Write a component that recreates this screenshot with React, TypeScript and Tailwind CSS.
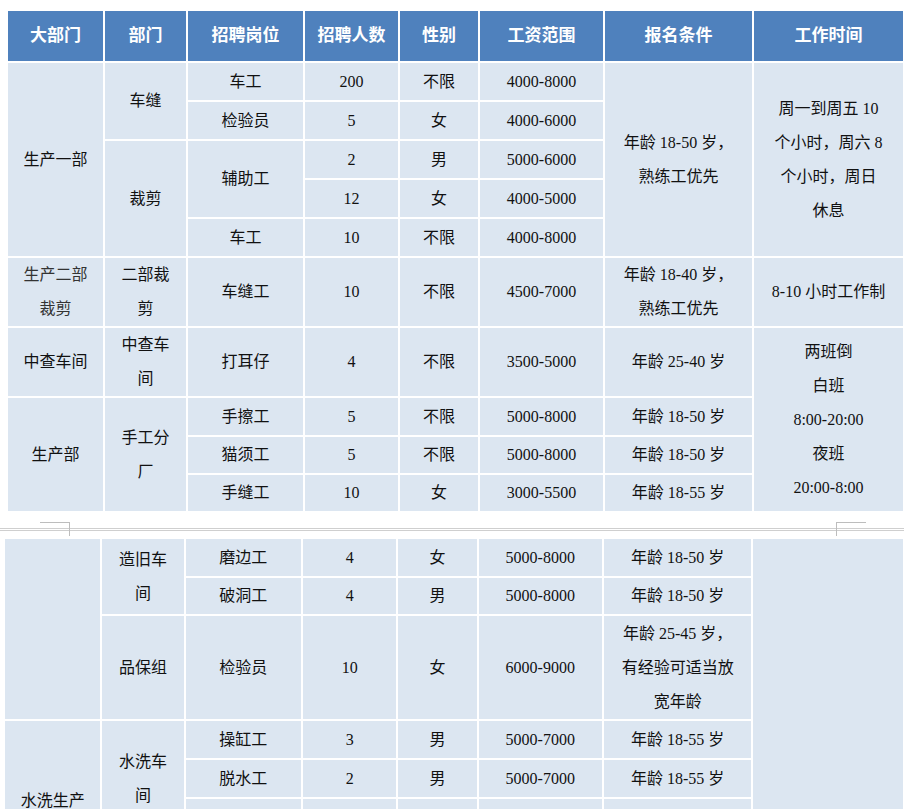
import React from "react";

const F = { fontFamily: '"Liberation Serif","Noto Sans CJK SC",serif' };
const W = [97, 83, 117, 95, 80, 125, 149, 151];

type C = { t?: React.ReactNode; rs?: number; cls?: string };
const Cell = ({ t, rs, cls }: C) => (
  <td rowSpan={rs} className={`border-2 border-white bg-[#dce6f1] text-center align-middle leading-[34px] text-[16px] text-[#111] ${cls ?? "px-[14px]"}`}>{t}</td>
);

function Row({ h, cells }: { h: number; cells: C[] }) {
  return <tr style={{ height: h }}>{cells.map((c, i) => <Cell key={i} {...c} />)}</tr>;
}

function Cols() {
  return <colgroup>{W.map((w, i) => <col key={i} style={{ width: w }} />)}</colgroup>;
}

const s = (...a: (string | C)[]): C[] => a.map((x) => (typeof x === "string" ? { t: x } : x));

export default function App() {
  const heads = ["大部门", "部门", "招聘岗位", "招聘人数", "性别", "工资范围", "报名条件", "工作时间"];
  return (
    <div className="w-[904px] h-[809px] overflow-hidden bg-white relative" style={F}>
      <div className="pt-[9px] pl-[6px]">
        <table className="table-fixed border-collapse w-[899px]">
          <Cols />
          <tbody>
            <tr style={{ height: 52 }}>
              {heads.map((h) => (
                <th key={h} className="border-2 border-white bg-[#4f81bd] text-white font-bold text-[17px] text-center">{h}</th>
              ))}
            </tr>
            <Row h={39} cells={s({ t: "生产一部", rs: 5, cls: "px-[14px] text-[#1f3864]" }, { t: "车缝", rs: 2 }, "车工", "200", "不限", "4000-8000", { t: "年龄 18-50 岁，熟练工优先", rs: 5 }, { t: "周一到周五 10 个小时，周六 8 个小时，周日休息", rs: 5, cls: "px-[20px]" })} />
            <Row h={39} cells={s("检验员", "5", "女", "4000-6000")} />
            <Row h={39} cells={s({ t: "裁剪", rs: 3 }, { t: "辅助工", rs: 2 }, "2", "男", "5000-6000")} />
            <Row h={39} cells={s("12", "女", "4000-5000")} />
            <Row h={39} cells={s("车工", "10", "不限", "4000-8000")} />
            <Row h={69} cells={s({ t: "生产二部裁剪", cls: "px-[14px] text-[#333]" }, "二部裁剪", "车缝工", "10", "不限", "4500-7000", "年龄 18-40 岁，熟练工优先", "8-10 小时工作制")} />
            <Row h={69} cells={s({ t: "中查车间", cls: "px-[14px] text-[#1f4e99]" }, "中查车间", "打耳仔", "4", "不限", "3500-5000", "年龄 25-40 岁", { t: <>两班倒<br />白班<br />8:00-20:00<br />夜班<br />20:00-8:00</>, rs: 4 })} />
            <Row h={39} cells={s({ t: "生产部", rs: 3 }, { t: "手工分厂", rs: 3 }, "手擦工", "5", "不限", "5000-8000", "年龄 18-50 岁")} />
            <Row h={38} cells={s("猫须工", "5", "不限", "5000-8000", "年龄 18-50 岁")} />
            <Row h={38} cells={s("手缝工", "10", "女", "3000-5500", "年龄 18-55 岁")} />
          </tbody>
        </table>
      </div>
      <div className="relative h-[24px]">
        <div className="absolute left-0 right-0 top-[15px] h-[3px] border-t border-b border-[#cfcfcf]" />
        <div className="absolute left-[40px] top-[9px] w-[30px] h-[14px] border-t border-r border-[#bdbdbd]" />
        <div className="absolute left-[836px] top-[9px] w-[30px] h-[14px] border-t border-l border-[#bdbdbd]" />
      </div>
      <div className="pl-[3px]">
        <table className="table-fixed border-collapse w-[902px]">
          <Cols />
          <tbody>
            <Row h={39} cells={s({ t: "", rs: 3 }, { t: "造旧车间", rs: 2 }, "磨边工", "4", "女", "5000-8000", "年龄 18-50 岁", { t: "", rs: 8 })} />
            <Row h={38} cells={s("破洞工", "4", "男", "5000-8000", "年龄 18-50 岁")} />
            <Row h={105} cells={s("品保组", "检验员", "10", "女", "6000-9000", "年龄 25-45 岁，有经验可适当放宽年龄")} />
            <Row h={39} cells={s({ t: "水洗生产部", rs: 4 }, { t: "水洗车间", rs: 3 }, "操缸工", "3", "男", "5000-7000", "年龄 18-55 岁")} />
            <Row h={39} cells={s("脱水工", "2", "男", "5000-7000", "年龄 18-55 岁")} />
            <Row h={39} cells={s("", "", "", "", "")} />
            <Row h={78} cells={s("", "", "", "", "", "")} />
          </tbody>
        </table>
      </div>
    </div>
  );
}
